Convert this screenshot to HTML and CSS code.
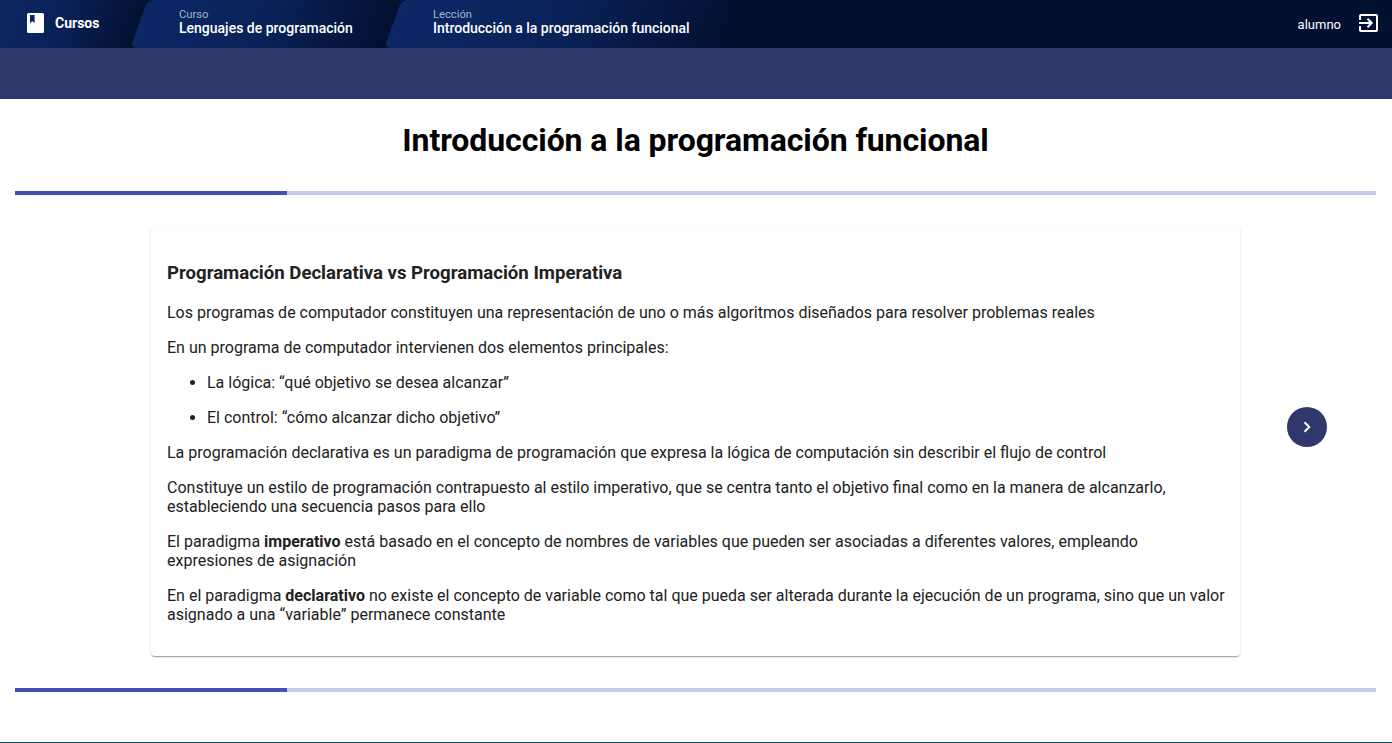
FILE: index.html
```html
<!DOCTYPE html>
<html lang="es">
<head>
    <meta charset="UTF-8">
    <title>Introducción a la programación funcional</title>
    <link rel="stylesheet" href="styles.css">
</head>
<body>
<header class="topbar">
    <a class="crumb crumb-home">
        <svg class="book-icon" viewBox="0 0 17 20" width="17" height="20">
            <path fill="#fff" fill-rule="evenodd" d="M1.500 0h14a1.500 1.500 0 0 1 1.500 1.500v17a1.500 1.500 0 0 1-1.500 1.500h-14A1.500 1.500 0 0 1 0 18.500v-17A1.500 1.500 0 0 1 1.500 0zM3 2v8l2.300-1.700L7.600 10V2z"/>
        </svg>
        <span class="crumb-home-text">Cursos</span>
    </a>
    <a class="crumb crumb-course">
        <span class="crumb-label">Curso</span>
        <span class="crumb-title">Lenguajes de programación</span>
    </a>
    <a class="crumb crumb-lesson">
        <span class="crumb-label">Lección</span>
        <span class="crumb-title">Introducción a la programación funcional</span>
    </a>
    <div class="user">
        <span class="user-name">alumno</span>
        <svg class="exit-icon" viewBox="0 0 19 18" width="19" height="18">
            <path fill="none" stroke="#fff" stroke-width="2" d="M1 6V2a1 1 0 0 1 1-1h15a1 1 0 0 1 1 1v14a1 1 0 0 1-1 1H2a1 1 0 0 1-1-1v-4"/>
            <path fill="none" stroke="#fff" stroke-width="2" d="M0 9h12M8.500 4.800L12.700 9l-4.200 4.200"/>
        </svg>
    </div>
</header>
<div class="subbar"></div>

<main class="lesson">
    <h1 class="lesson-title">Introducción a la programación funcional</h1>
    <div class="progress"><div class="progress-fill"></div></div>

    <div class="slide-row">
        <article class="card">
            <h2>Programación Declarativa vs Programación Imperativa</h2>
            <p>Los programas de computador constituyen una representación de uno o más algoritmos diseñados para resolver problemas reales</p>
            <p>En un programa de computador intervienen dos elementos principales:</p>
            <ul>
                <li>La lógica: “qué objetivo se desea alcanzar”</li>
                <li>El control: “cómo alcanzar dicho objetivo”</li>
            </ul>
            <p>La programación declarativa es un paradigma de programación que expresa la lógica de computación sin describir el flujo de control</p>
            <p>Constituye un estilo de programación contrapuesto al estilo imperativo, que se centra tanto el objetivo final como en la manera de alcanzarlo, estableciendo una secuencia pasos para ello</p>
            <p>El paradigma <strong>imperativo</strong> está basado en el concepto de nombres de variables que pueden ser asociadas a diferentes valores, empleando expresiones de asignación</p>
            <p>En el paradigma <strong>declarativo</strong> no existe el concepto de variable como tal que pueda ser alterada durante la ejecución de un programa, sino que un valor asignado a una “variable” permanece constante</p>
        </article>
        <button class="next-btn" type="button" aria-label="Siguiente">
            <svg viewBox="0 0 12 12" width="12" height="12">
                <path fill="none" stroke="#fff" stroke-width="2" d="M3.500 1.200L8.300 6l-4.800 4.800"/>
            </svg>
        </button>
    </div>

    <div class="progress progress-bottom"><div class="progress-fill"></div></div>
</main>
<div class="page-end"></div>
</body>
</html>
```

FILE: styles.css
```css
* {
    box-sizing: border-box;
}
body {
    margin: 0;
    height: 743px;
    overflow: hidden;
    display: flex;
    flex-direction: column;
    font-family: Roboto, "Liberation Sans", sans-serif;
    color: #212121;
    background: #fff;
}

/* barra superior */
.topbar {
    height: 48px;
    display: flex;
    align-items: center;
    background: #021031;
    color: #fff;
    overflow: hidden;
}
.crumb {
    height: 48px;
    display: flex;
    flex-direction: column;
    position: relative;
    z-index: 0;
    padding: 8px 0 0 40px;
}
.crumb::before {
    content: "";
    position: absolute;
    top: 0;
    bottom: 0;
    left: 0;
    right: 0;
    z-index: -1;
    border-radius: 6px 0 0 6px;
    background: linear-gradient(90deg, #0c2765 0%, #0a2258 50%, #021031 100%);
    transform: skewX(-20deg);
}
.crumb-home {
    width: 139px;
    flex-direction: row;
    align-items: center;
    padding: 0 0 2px 27px;
}
.crumb-home::before {
    left: -20px;
}
.crumb-home-text {
    margin-left: 11px;
    font-size: 14px;
    font-weight: 700;
}
.book-icon {
    display: block;
}
.crumb-course {
    width: 254px;
}
.crumb-lesson {
    width: 340px;
}
.crumb-label {
    font-size: 11.2px;
    line-height: 13px;
    color: #a9b3d0;
}
.crumb-title {
    margin-top: -1px;
    font-size: 14px;
    line-height: 16px;
    font-weight: 500;
}
.user {
    margin-left: auto;
    padding-right: 14px;
    display: flex;
    align-items: center;
    gap: 18px;
}
.user-name {
    font-size: 13px;
}
.exit-icon {
    display: block;
    margin-bottom: 2px;
}

.subbar {
    height: 51px;
    background: #30376a;
}

/* contenido */
.lesson {
    flex: 1;
    padding: 0 16px 0 15px;
}
.lesson-title {
    margin: 0;
    padding-top: 22px;
    height: 92px;
    font-size: 32px;
    line-height: 38px;
    font-weight: 700;
    letter-spacing: -0.08px;
    text-align: center;
    color: #000;
}
.progress {
    height: 4px;
    background: #c5cae9;
}
.progress-fill {
    width: 20%;
    height: 100%;
    background: #3f51b5;
}
.progress-bottom {
    margin-top: 32px;
}
.slide-row {
    margin-top: 32px;
    display: flex;
    align-items: center;
}
.card {
    width: 1089px;
    height: 429px;
    margin-left: 136px;
    padding: 16px 15px 16px 16px;
    background: #fff;
    border-radius: 4px;
    box-shadow: 0 2px 1px -1px rgba(0,0,0,.2), 0 1px 1px 0 rgba(0,0,0,.14), 0 1px 3px 0 rgba(0,0,0,.12);
    font-size: 16px;
    line-height: 19px;
}
.card h2 {
    margin: 19px 0;
    font-size: 18.6px;
    line-height: 22px;
    font-weight: 700;
}
.card p {
    margin: 0 0 16px;
}
.card ul {
    margin: 0;
    padding-left: 40px;
}
.card li {
    margin-bottom: 16px;
}
.next-btn {
    width: 40px;
    height: 40px;
    margin: 0 0 29px 47px;
    padding: 0;
    border: none;
    border-radius: 50%;
    background: #30376a;
    display: flex;
    align-items: center;
    justify-content: center;
}
.page-end {
    height: 1px;
    background: #11525f;
}
```
